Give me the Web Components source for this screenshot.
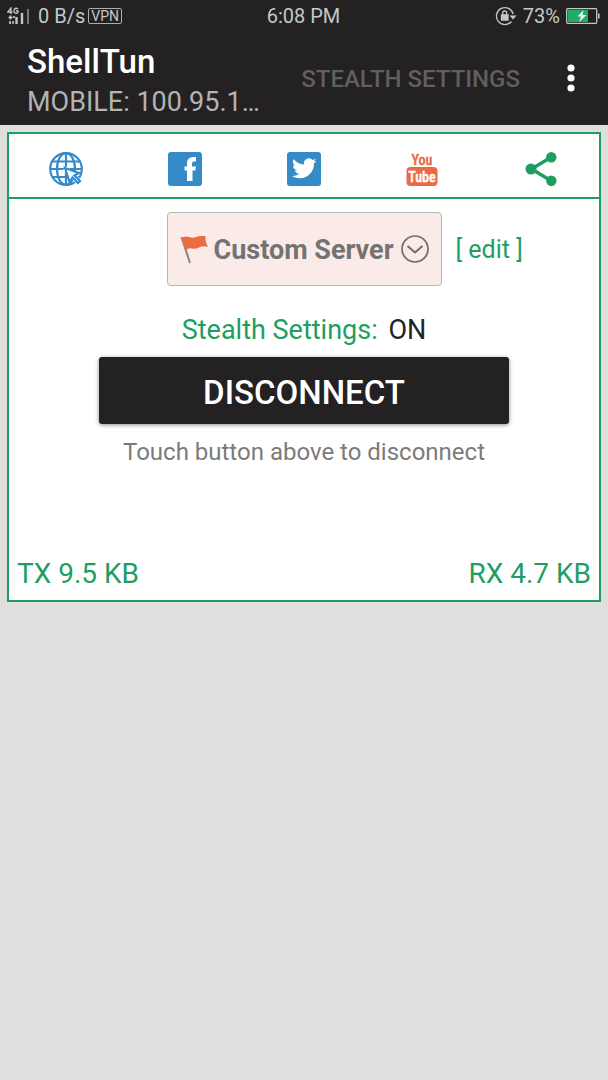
<!DOCTYPE html>
<html lang="en">
<head>
<meta charset="utf-8">
<meta name="viewport" content="width=device-width, initial-scale=1">
<title>ShellTun</title>
<style>
  body {
    margin: 0;
    background: #dfdfdf;
    font-family: Roboto, "Liberation Sans", sans-serif;
    --dark: #232122;
    --green: #1f9e62;
    --muted: #7b7b7b;
  }
</style>
</head>
<body>
<vpn-app></vpn-app>

<script>
function define(name, html) {
    const template = document.createElement('template');
    template.innerHTML = html;

    customElements.define(name, class extends HTMLElement {
        constructor() {
            super();
            this.attachShadow({ mode: 'open' });
            this.shadowRoot.appendChild(template.content.cloneNode(true));
        }
    });
}

define('status-bar', `
  <style>
    :host { display: grid; grid-template-columns: 1fr auto 1fr; align-items: center; height: 31px; padding: 0 8px 0 7px; background: var(--dark); color: #c3c9c7; font-size: 20px; line-height: 24px; }
    div { display: flex; align-items: center; }
    svg { display: block; }
    .right { justify-content: flex-end; gap: 6px; }
    .speed { margin-left: 9px; }
    .vpn { margin-left: 3px; padding: 0 2px; border: 1px solid #a9afad; border-radius: 2px; font-size: 14px; line-height: 14px; }
  </style>
  <div>
    <svg width="22" height="18" viewBox="0 0 22 18" fill="none" stroke="#c3c9c7">
      <path d="M4 7V1L.8 5H5.500M11 2Q9 .500 7.500 2Q6.500 4 7.600 5.800Q9.500 7 11 5.500V4H9" stroke-width="1.300"/>
      <path d="M3.500 8.500v4M1.500 10.500h4M3 14v3M7 9v2" stroke-width="1.700"/>
      <path d="M9.500 10v7M15 6v11" stroke-width="2.400"/>
      <path d="M6 14v3" stroke-width="1.500"/>
      <path d="M21 2v15" stroke="#777" stroke-width="2"/>
    </svg>
    <span class="speed">0 B/s</span>
    <span class="vpn">VPN</span>
  </div>
  <span>6:08 PM</span>
  <div class="right">
    <svg width="22" height="20" viewBox="0 0 22 20" fill="none" stroke="#c3c9c7" stroke-width="1.300">
      <path d="M18.200 8A8.500 8.500 0 1 0 16.500 15.500"/>
      <path d="M14.500 9.500h7l-3.500 4z" fill="#c3c9c7" stroke="none"/>
      <path d="M6.500 9h6.500v5h-6.500z" fill="#c3c9c7"/>
      <path d="M7.700 9V7a2 2 0 0 1 4 0v2"/>
    </svg>
    <span>73%</span>
    <svg width="34" height="16" viewBox="0 0 34 16">
      <rect x=".7" y=".7" width="30" height="14.6" rx="1" fill="none" stroke="#c3c9c7" stroke-width="1.3"/>
      <path d="M2 2h20v12h-20z" fill="#22ab6b"/>
      <path d="M17.500 2l-6 6.500h3.500l-2 5.500 7.500-7h-4z" fill="#eef5f2"/>
      <path d="M32 5.500h1.600v5h-1.600z" fill="#c3c9c7"/>
    </svg>
  </div>
`);

define('app-bar', `
  <style>
    :host { display: flex; align-items: center; height: 94px; padding: 0 24px 0 27px; background: var(--dark); color: #fff; }
    .titles { flex: 1; min-width: 0; padding-top: 8px; }
    h1 { margin: 0; font-size: 33px; line-height: 40px; font-weight: 500; }
    p { margin: 0; font-size: 27px; line-height: 40px; color: #b3b3b3; white-space: nowrap; }
    button { border: 0; padding: 0; background: none; font: inherit; color: inherit; }
    .stealth { padding-top: 2px; font-size: 24px; line-height: 32px; font-weight: 500; color: #605e5f; }
    .menu { margin-left: 38px; width: 26px; display: flex; justify-content: center; }
  </style>
  <div class="titles">
    <h1><slot></slot></h1>
    <p><slot name="address"></slot></p>
  </div>
  <button class="stealth" disabled>STEALTH SETTINGS</button>
  <button class="menu" aria-label="More options">
    <svg width="8" height="28" viewBox="0 0 8 28" fill="#fff"><circle cx="4" cy="4" r="3.600"/><circle cx="4" cy="14" r="3.600"/><circle cx="4" cy="24" r="3.600"/></svg>
  </button>
`);

define('social-links', `
  <style>
    :host { display: flex; justify-content: space-between; align-items: center; height: 65px; padding: 6px 41px 0 40px; box-sizing: border-box; border-bottom: 2px solid var(--green); }
    a { display: block; text-decoration: none; }
    svg { display: block; }
    .you { font: 500 14px "Liberation Sans Narrow", "Roboto Condensed", Roboto, sans-serif; }
  </style>
  <a href="#web" aria-label="Website">
    <svg width="34" height="34" viewBox="0 0 34 34" fill="none" stroke="#348bc8" stroke-width="2.200">
      <circle cx="17" cy="17" r="15.800"/>
      <path d="M17 1v32M1 17h32M4 9.500h26M4 25h26"/>
      <ellipse cx="17" cy="17" rx="9" ry="15.800"/>
      <path d="M16 16 L32 32" stroke="#fff" stroke-width="6"/>
      <path d="M16 16 L20.500 30 L23.500 25.500 L29 31 L31 29 L25.500 23.500 L30 21 Z" fill="#fff"/>
    </svg>
  </a>
  <a href="#facebook" aria-label="Facebook">
    <svg width="34" height="34" viewBox="0 0 34 34">
      <rect width="34" height="34" rx="3" fill="#348bc8"/>
      <path d="M19 29V18.500h-2.500v-4H19V11.500Q19 5 25 5h3v4.500h-2.200Q24 9.500 24 11.500v3h4l-.6 4H24.500V29z" fill="#fff"/>
    </svg>
  </a>
  <a href="#twitter" aria-label="Twitter">
    <svg width="34" height="34" viewBox="0 0 34 34">
      <rect width="34" height="34" rx="3" fill="#348bc8"/>
      <path transform="translate(5 4) scale(1.020)" fill="#fff" d="M23.950 4.570a10 10 0 0 1-2.820.770 4.960 4.960 0 0 0 2.160-2.720c-.950.550-2 .950-3.130 1.180a4.920 4.920 0 0 0-8.380 4.480C7.690 8.100 4.070 6.130 1.640 3.160a4.820 4.820 0 0 0-.670 2.480c0 1.710.870 3.210 2.190 4.100a4.900 4.900 0 0 1-2.230-.620v.060a4.920 4.920 0 0 0 3.950 4.830 5 5 0 0 1-2.210.080 4.940 4.940 0 0 0 4.600 3.420A9.870 9.870 0 0 1 0 19.540a14 14 0 0 0 7.550 2.210c9.050 0 14-7.500 14-13.980l-.020-.640a9.940 9.940 0 0 0 2.420-2.560z"/>
    </svg>
  </a>
  <a href="#youtube" aria-label="YouTube">
    <svg width="34" height="34" viewBox="0 0 34 34" text-anchor="middle">
      <text class="you" x="17" y="13" fill="#e96b42" stroke="#e96b42" stroke-width=".4">You</text>
      <rect x="1.500" y="15" width="31" height="19" rx="4" fill="#e96b42"/>
      <text class="you" x="17" y="30" fill="#fff" stroke="#fff" stroke-width=".4">Tube</text>
    </svg>
  </a>
  <a href="#share" aria-label="Share">
    <svg width="34" height="34" viewBox="0 0 34 34" fill="#1f9e62">
      <path d="M27.500 5L7.500 17l20 12" fill="none" stroke="#1f9e62" stroke-width="3.500"/>
      <circle cx="7" cy="17" r="5.500"/><circle cx="27.300" cy="5.300" r="5.200"/><circle cx="27.300" cy="28.700" r="5.200"/>
    </svg>
  </a>
`);

define('server-picker', `
  <style>
    :host { display: grid; grid-template-columns: 1fr auto 1fr; align-items: center; padding-top: 13px; }
    label { grid-column: 2; display: flex; align-items: center; gap: 6px; height: 72px; padding: 0 12px; border: 1px solid #a5bfb3; border-radius: 4px; background: #faebe9; }
    select { appearance: none; border: 0; margin: 0; padding: 2px 0 0; background: none; font: bold 27px/36px Roboto, "Liberation Sans", sans-serif; color: #757371; }
    svg { display: block; flex: none; }
    a { margin-left: 14px; padding-top: 2px; font-size: 25px; line-height: 36px; color: var(--green); text-decoration: none; }
  </style>
  <label>
    <svg width="28" height="30" viewBox="0 0 28 30">
      <path d="M1.500 3L10 29" stroke="#85827f" stroke-width="2"/>
      <path d="M1.500 4Q5 1.500 9 3T16 3T25.500 2Q25 8 28 13Q23 11.500 19 13.500T12 14.500T5.500 16z" fill="#ee6a42"/>
    </svg>
    <select aria-label="Server"><option>Custom Server</option></select>
    <svg width="28" height="28" viewBox="0 0 28 28" fill="none" stroke="#706c6b" stroke-width="1.700">
      <circle cx="14" cy="14" r="13"/><path d="M6.500 11l7.500 6.500 7.500-6.500" stroke-width="2"/>
    </svg>
  </label>
  <a href="#edit">[ edit ]</a>
`);

define('connect-panel', `
  <style>
    :host { display: block; text-align: center; padding: 26px 90px 0; }
    p { margin: 0; color: var(--muted); font-size: 24px; line-height: 32px; }
    .state { color: var(--green); font-size: 27px; line-height: 36px; }
    .state span { margin-left: 4px; color: #222; }
    button { display: block; width: 100%; height: 67px; margin: 9px 0 12px; padding: 4px 0 0; border: 0; border-radius: 3px; background: var(--dark); color: #fff; font: 500 33px/40px Roboto, "Liberation Sans", sans-serif; box-shadow: 0 1px 4px rgba(0, 0, 0, .45); }
  </style>
  <p class="state">Stealth Settings: <span>ON</span></p>
  <button>DISCONNECT</button>
  <p>Touch button above to disconnect</p>
`);

define('traffic-row', `
  <style>
    :host { display: flex; justify-content: space-between; padding: 88px 8px 8px; color: var(--green); font-size: 28px; line-height: 36px; }
  </style>
  <span><slot name="tx"></slot></span>
  <span><slot name="rx"></slot></span>
`);

define('vpn-app', `
  <style>
    :host { display: block; }
    main { margin: 7px; border: 2px solid var(--green); background: #fff; }
  </style>
  <status-bar></status-bar>
  <app-bar>ShellTun<span slot="address">MOBILE: 100.95.1…</span></app-bar>
  <main>
    <social-links></social-links>
    <server-picker></server-picker>
    <connect-panel></connect-panel>
    <traffic-row><span slot="tx">TX 9.5 KB</span><span slot="rx">RX 4.7 KB</span></traffic-row>
  </main>
`);
</script>
</body>
</html>
